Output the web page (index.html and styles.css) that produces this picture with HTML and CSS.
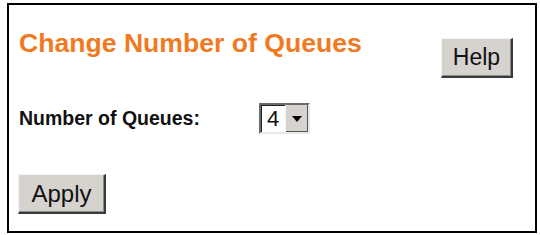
FILE: index.html
```html
<!DOCTYPE html>
<html>
<head>
<meta charset="utf-8">
<link rel="stylesheet" href="styles.css">
</head>
<body>
<div class="panel">
  <div class="header">
    <h1 class="title">Change Number of Queues</h1>
    <button class="btn btn-help">Help</button>
  </div>
  <div class="field">
    <span class="label">Number of Queues:</span>
    <div class="select">
      <span class="value">4</span>
      <span class="arrow"><svg width="10" height="6" viewBox="0 0 10 6"><path d="M0 0H10L5 6Z" fill="#000"/></svg></span>
    </div>
  </div>
  <div class="actions">
    <button class="btn btn-apply">Apply</button>
  </div>
</div>
</body>
</html>
```

FILE: styles.css
```css
html, body {
  margin: 0;
  padding: 0;
  background: #fff;
}
body {
  font-family: "Liberation Sans", Arial, sans-serif;
}
.panel {
  box-sizing: border-box;
  width: 530px;
  height: 230px;
  margin: 3px 0 0 7px;
  border: 2px solid #000;
  padding: 0 22px 0 10px;
}
.header {
  display: flex;
  justify-content: space-between;
  align-items: flex-start;
  padding-top: 23px;
}
.title {
  margin: 0;
  font-size: 26.6px;
  line-height: 30px;
  font-weight: bold;
  color: #f07a22;
}
.btn {
  font-family: "Liberation Sans", Arial, sans-serif;
  background: #d6d3ce;
  color: #111;
  border-style: solid;
  border-width: 1px 2px 2px 1px;
  border-color: #f4f4f4 #3a3a3a #3a3a3a #f4f4f4;
  box-shadow: inset -1px -1px 0 #8a8a8a;
  padding: 0;
  margin: 0;
}
.btn-help {
  width: 72px;
  height: 40px;
  font-size: 23px;
  margin-top: 10px;
}
.field {
  display: flex;
  align-items: center;
  margin-top: 25px;
}
.label {
  width: 240px;
  font-size: 19.5px;
  font-weight: bold;
  color: #111;
}
.select {
  display: flex;
  box-sizing: border-box;
  height: 31px;
  width: 51px;
  border-style: solid;
  border-width: 2px;
  border-color: #6a6a6a #e8e8e8 #e8e8e8 #6a6a6a;
  box-shadow: inset 1px 1px 0 #222;
  background: #fff;
}
.value {
  flex: 1;
  font-size: 22px;
  line-height: 27px;
  padding-left: 6px;
  color: #111;
}
.arrow {
  width: 22px;
  display: flex;
  align-items: center;
  justify-content: center;
  background: #d6d3ce;
  border-left: 1px solid #f4f4f4;
  box-shadow: inset -1px -1px 0 #555;
}
.actions {
  margin-top: 40px;
}
.btn-apply {
  width: 88px;
  height: 40px;
  font-size: 24px;
  margin-left: -1px;
}
```
